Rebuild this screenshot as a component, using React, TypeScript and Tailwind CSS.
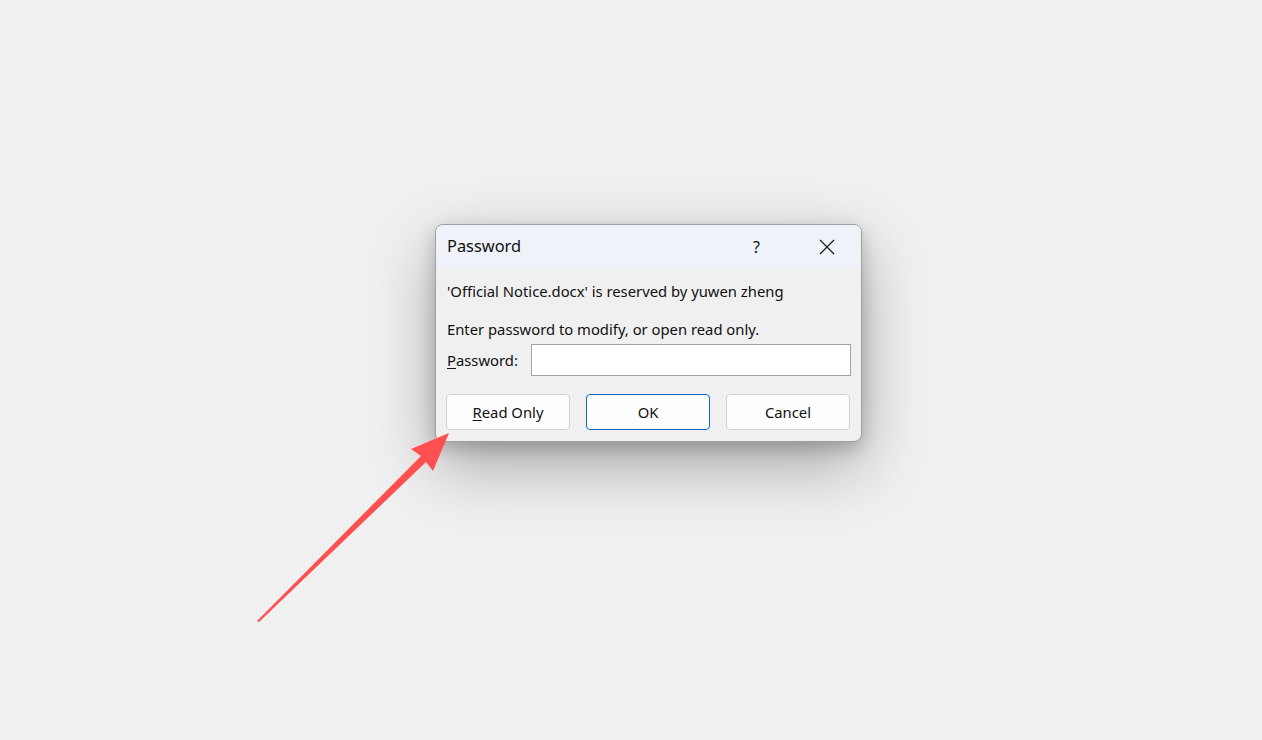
import React from 'react';

const font = { fontFamily: '"Noto Sans", "Open Sans", sans-serif' };

function CloseIcon() {
  return (
    <svg width="16" height="16" viewBox="0 0 16 16" fill="none">
      <path d="M1 1 L15 15 M15 1 L1 15" stroke="#1a1a1a" strokeWidth="1.2" />
    </svg>
  );
}

function Arrow() {
  return (
    <svg
      className="absolute left-0 top-0 pointer-events-none"
      width="1262"
      height="740"
      viewBox="0 0 1262 740"
    >
      <polygon
        points="257,621 421,456 411,449 449,433 433,471 426,462 259,622"
        fill="#fe5050"
      />
    </svg>
  );
}

export default function App() {
  return (
    <div className="relative w-[1262px] h-[740px] bg-[#f0f0f0] overflow-hidden" style={font}>
      <div className="pt-[224px] pl-[435px]">
        <div className="w-[427px] h-[218px] rounded-[8px] border border-[#9f9f9f] bg-[#f0f0f0] overflow-hidden shadow-[0_24px_64px_rgba(0,0,0,0.3),0_6px_18px_rgba(0,0,0,0.2)] flex flex-col">
          <div className="h-[43px] bg-[#eff2f8] flex items-center pl-[11px] pr-[26px]">
            <span className="text-[16.4px] text-[#111] flex-1">Password</span>
            <span className="text-[16px] text-[#111] mr-[59px]">?</span>
            <CloseIcon />
          </div>
          <div className="flex-1 px-[10px] text-[14.8px] text-[#111]">
            <div className="mt-[12px] h-[22px] flex items-center pl-px">'Official Notice.docx' is reserved by yuwen zheng</div>
            <div className="mt-[16px] h-[22px] flex items-center pl-px">Enter password to modify, or open read only.</div>
            <div className="mt-[4px] flex items-center">
              <span className="w-[85px] pl-px">
                <span className="underline underline-offset-2">P</span>assword:
              </span>
              <div className="w-[320px] h-[32px] bg-white border border-[#a3a3a3]" />
            </div>
            <div className="mt-[18px] flex gap-[16px]">
              <button className="w-[124px] h-[36px] rounded-[4px] bg-[#fdfdfd] border border-[#d0d0d0] text-[14.8px] text-[#111]">
                <span className="underline underline-offset-2">R</span>ead Only
              </button>
              <button className="w-[124px] h-[36px] rounded-[4px] bg-[#fdfdfd] border border-[#0067c0] text-[14.8px] text-[#111]">
                OK
              </button>
              <button className="w-[124px] h-[36px] rounded-[4px] bg-[#fdfdfd] border border-[#d0d0d0] text-[14.8px] text-[#111]">
                Cancel
              </button>
            </div>
          </div>
        </div>
      </div>
      <Arrow />
    </div>
  );
}
